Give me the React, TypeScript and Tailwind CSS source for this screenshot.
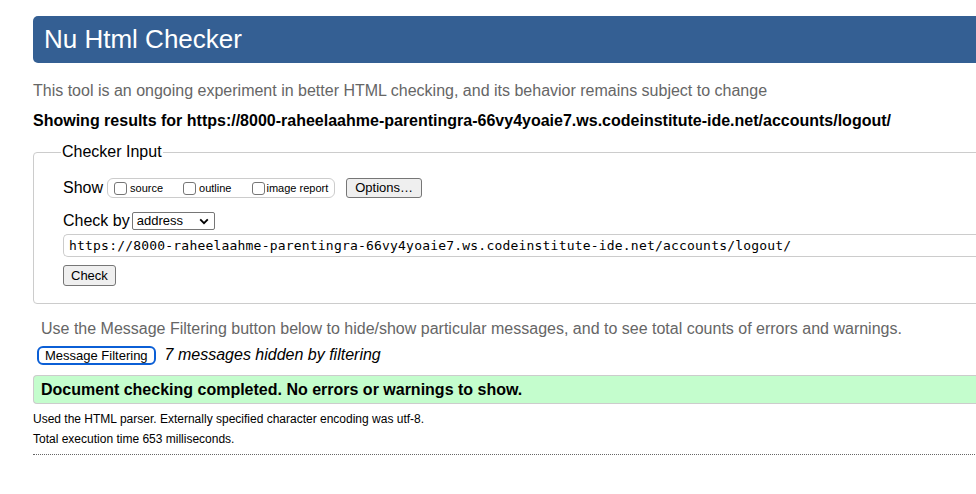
export default function App() {
  const url = 'https://8000-raheelaahme-parentingra-66vy4yoaie7.ws.codeinstitute-ide.net/accounts/logout/'

  return (
    <div className="w-[976px] h-[494px] overflow-hidden bg-white font-['Liberation_Sans',Arial,sans-serif] text-black">
      <div className="ml-[33px] w-[1100px] pt-[16px]">
        <h1 className="h-[47px] rounded-[5px] bg-[#345f93] pl-[11px] text-[26px] leading-[47px] text-white">
          Nu Html Checker
        </h1>

        <p className="mt-[18px] text-[16px] leading-[20px] text-[#666]">
          This tool is an ongoing experiment in better HTML checking, and its behavior remains subject to change
        </p>
        <p className="mt-[10px] text-[16px] font-bold leading-[20px]">Showing results for {url}</p>

        <fieldset className="mt-[11px] rounded-[4px] border border-[#ccc] pb-[16px] pl-[29px] pr-0">
          <legend className="ml-[-2px] px-[1px] text-[16px] leading-[20px]">Checker Input</legend>

          <div className="mt-[16px] flex items-center">
            <span className="text-[16px] leading-[20px]">Show</span>
            <div className="ml-[4px] flex h-[20px] items-center rounded-[6px] border border-[#ccc] pl-[6px] pr-[6px] text-[11px]">
              <label className="flex items-center">
                <span className="h-[13px] w-[13px] rounded-[3px] border border-[#767676] bg-white" />
                <span className="ml-[3px]">source</span>
              </label>
              <label className="ml-[20px] flex items-center">
                <span className="h-[13px] w-[13px] rounded-[3px] border border-[#767676] bg-white" />
                <span className="ml-[3px]">outline</span>
              </label>
              <label className="ml-[21px] flex items-center">
                <span className="h-[13px] w-[13px] rounded-[3px] border border-[#767676] bg-white" />
                <span className="ml-[1px]">image report</span>
              </label>
            </div>
            <button className="ml-[11px] h-[20px] rounded-[3px] border border-[#767676] bg-[#efefef] px-[8px] text-[13px] leading-[18px]">
              Options…
            </button>
          </div>

          <div className="mt-[13px] flex items-center">
            <span className="text-[16px] leading-[20px]">Check by</span>
            <div className="ml-[2px] flex h-[18px] w-[83px] items-center justify-between rounded-[2px] border border-[#767676] bg-white pl-[4px] pr-[5px] text-[13px]">
              <span>address</span>
              <svg width="10" height="7" viewBox="0 0 10 7">
                <path d="M1.2 1.3 L5 5.2 L8.8 1.3" fill="none" stroke="#000" strokeWidth="1.8" />
              </svg>
            </div>
          </div>

          <div className="mt-[3px] flex h-[23px] items-center rounded-l-[5px] border border-r-0 border-[#ccc] pl-[5px] font-['DejaVu_Sans_Mono',monospace] text-[13px] tracking-[0.2px]">
            {url}
          </div>

          <button className="mt-[8px] h-[21px] rounded-[3px] border border-[#767676] bg-[#efefef] px-[7px] text-[13px] leading-[19px]">
            Check
          </button>
        </fieldset>

        <p className="mt-[15px] pl-[8px] text-[16px] leading-[20px] text-[#666]">
          Use the Message Filtering button below to hide/show particular messages, and to see total counts of errors and warnings.
        </p>

        <div className="mt-[6px] flex items-center">
          <button className="ml-[4px] h-[19px] rounded-[6px] border-2 border-[#0b5fd6] bg-white px-[6px] text-[13px] leading-[15px]">
            Message Filtering
          </button>
          <span className="ml-[9px] text-[16px] italic leading-[20px]">7 messages hidden by filtering</span>
        </div>

        <div className="mt-[10px] flex h-[29px] items-center rounded-l-[4px] border border-r-0 border-[#ccc] bg-[#c4fdcd] pl-[7px] text-[16px] font-bold">
          Document checking completed. No errors or warnings to show.
        </div>

        <p className="mt-[8px] text-[12px] leading-[15px]">
          Used the HTML parser. Externally specified character encoding was utf-8.
        </p>
        <p className="mt-[5px] text-[12px] leading-[15px]">Total execution time 653 milliseconds.</p>
        <div className="mt-[7px] border-t border-dotted border-[#666]" />
      </div>
    </div>
  )
}
